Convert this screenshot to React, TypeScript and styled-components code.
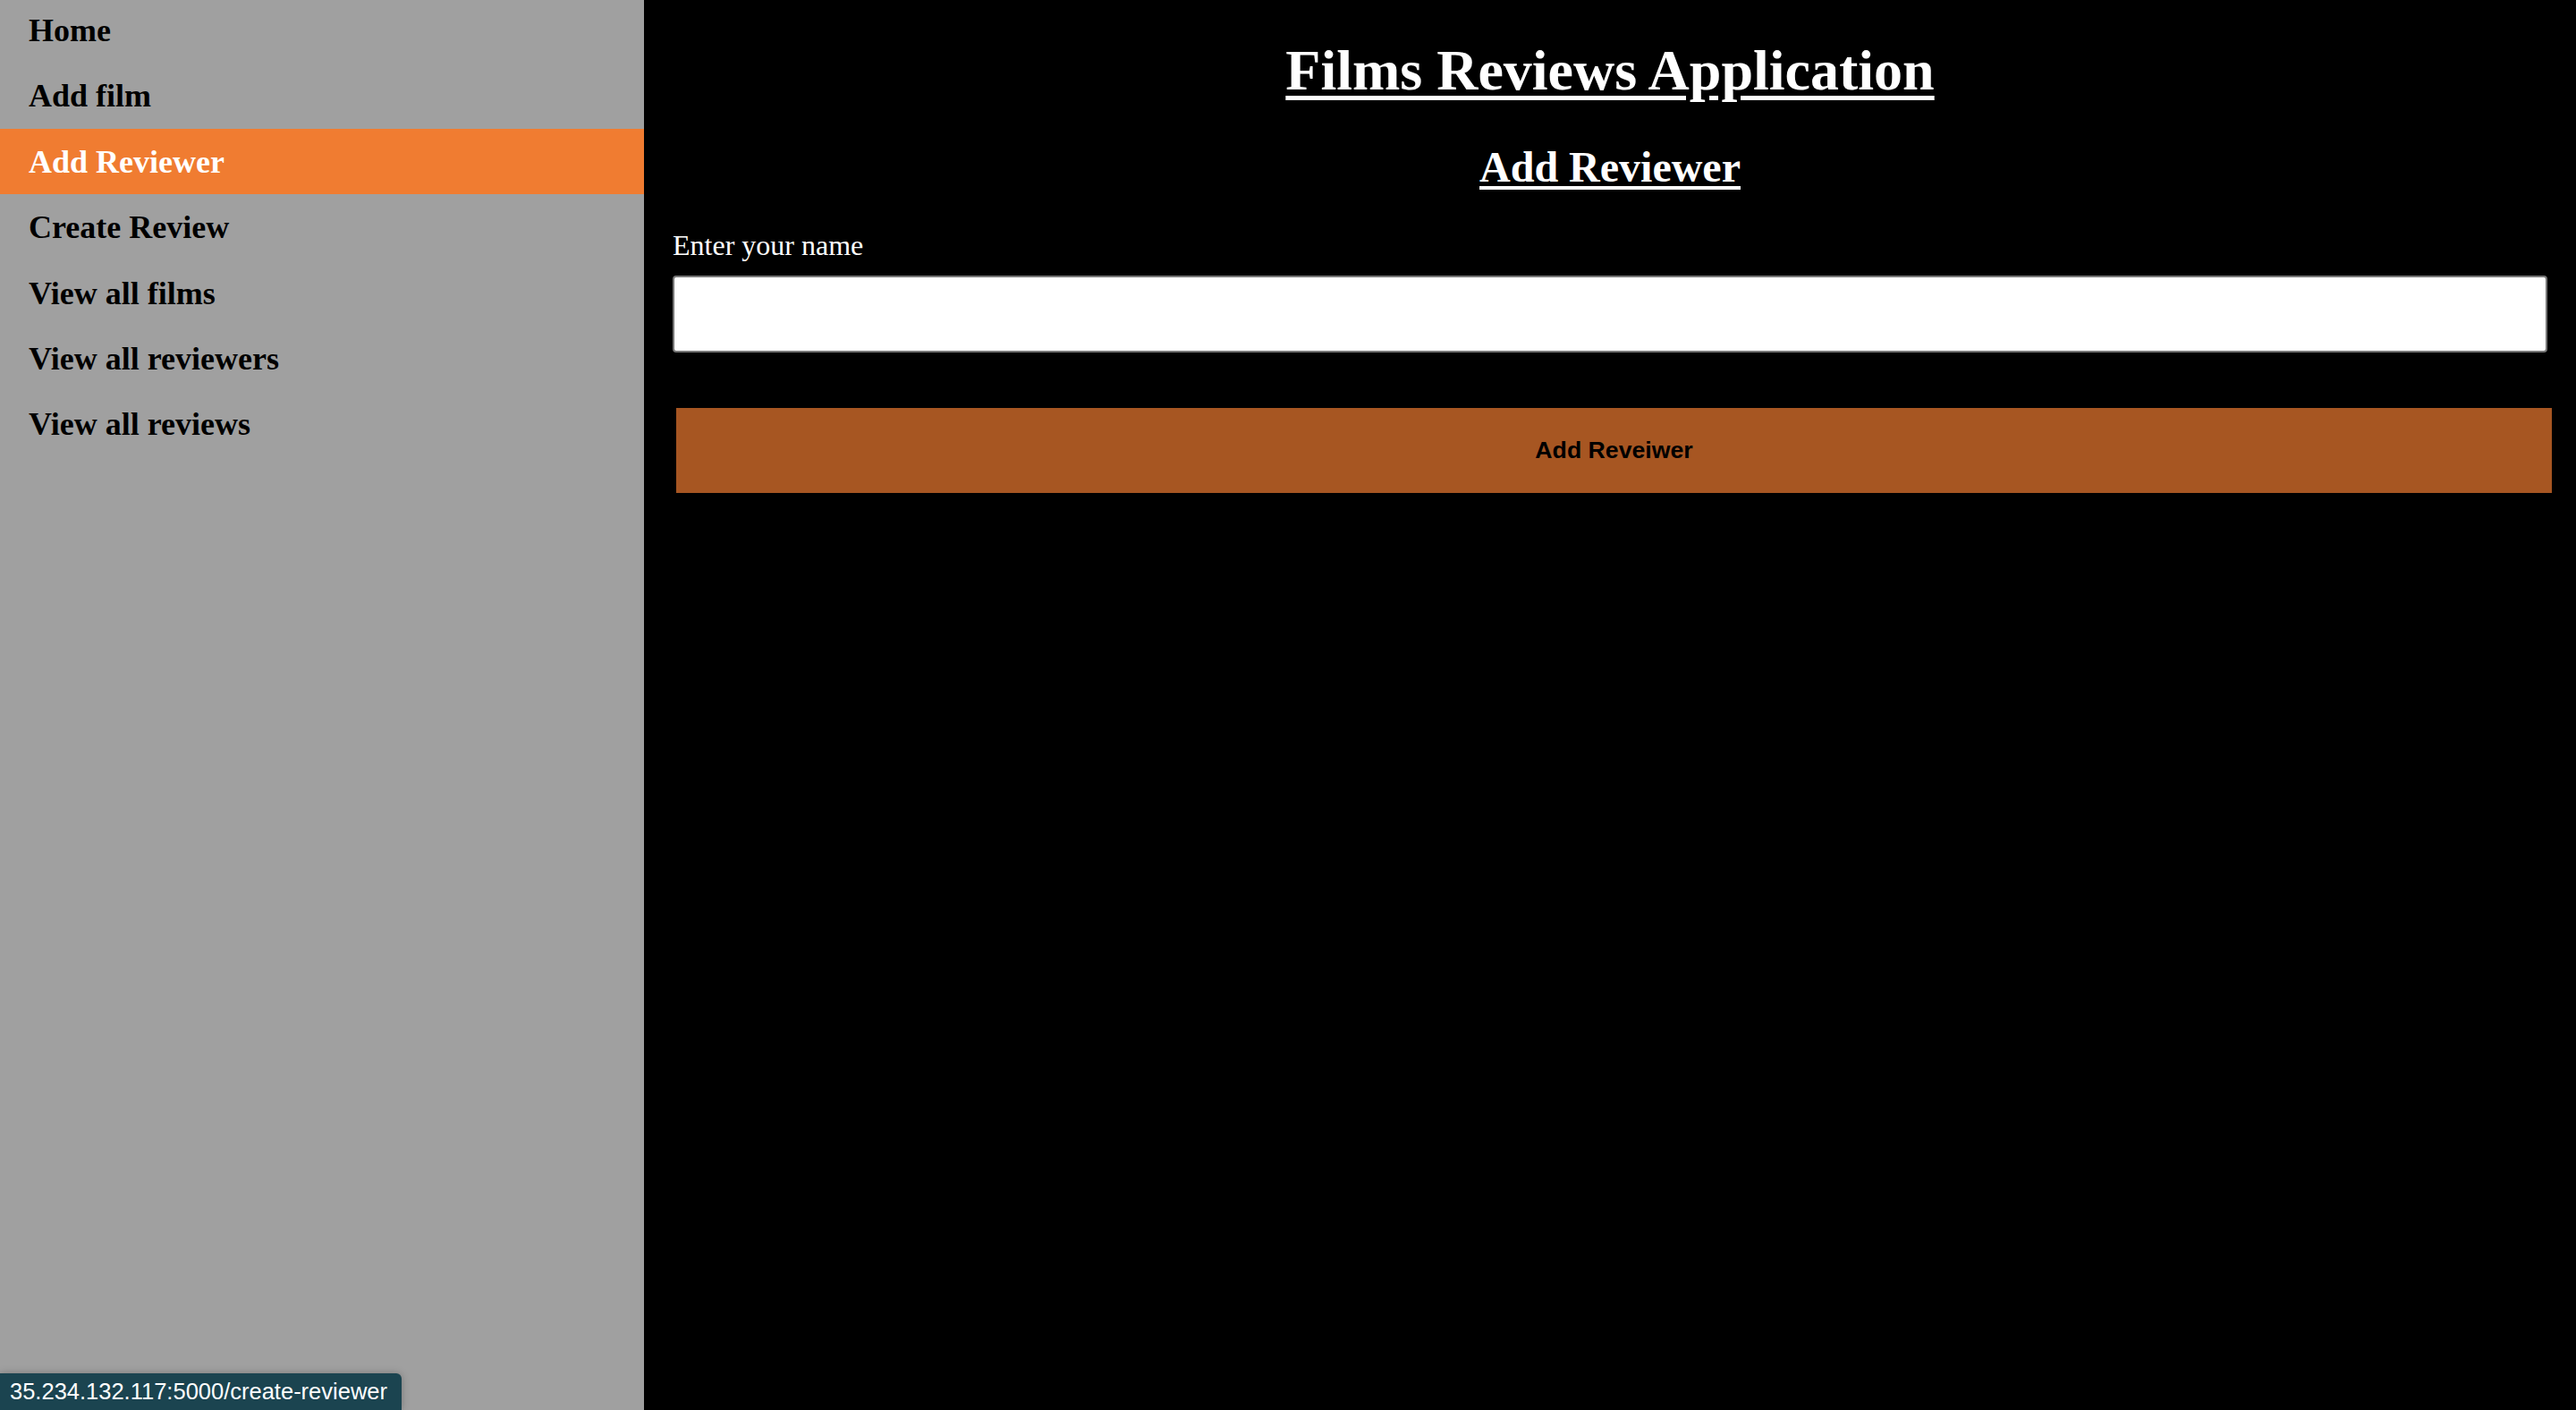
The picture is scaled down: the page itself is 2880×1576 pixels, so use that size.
import React from "react";
import styled, { createGlobalStyle } from "styled-components";

const GlobalStyle = createGlobalStyle`
  html, body {
    margin: 0;
    padding: 0;
    background: #000;
    font-family: "Liberation Serif", "Times New Roman", serif;
  }
  #root {
    min-height: 100vh;
  }
  * { box-sizing: border-box; }
`;

const Page = styled.div`
  display: flex;
  min-height: 100vh;
  width: 100%;
  position: relative;
  overflow: hidden;
`;

const Sidebar = styled.nav`
  width: 720px;
  flex: 0 0 720px;
  background: #a0a0a0;
  display: flex;
  flex-direction: column;
  margin: 0;
`;

const NavList = styled.div`
  display: flex;
  flex-direction: column;
  margin-top: -3px;
`;

const NavLink = styled.a<{ $active?: boolean }>`
  display: block;
  padding: 17px 32px 15px 32px;
  font-family: "Liberation Serif", "Times New Roman", serif;
  font-weight: bold;
  font-size: 36px;
  line-height: 41.4px;
  text-decoration: none;
  color: ${(p) => (p.$active ? "#ffffff" : "#000000")};
  background: ${(p) => (p.$active ? "#f07c31" : "transparent")};
  cursor: pointer;
`;

const Main = styled.main`
  flex: 1;
  background: #000;
  color: #fff;
  padding: 42px 32px 0 32px;
  display: flex;
  flex-direction: column;
`;

const Title = styled.h1`
  margin: 0;
  text-align: center;
  font-size: 64px;
  line-height: 74px;
  font-weight: bold;
  text-decoration: underline;
  text-decoration-thickness: 5px;
  text-underline-offset: 7px;
`;

const Subtitle = styled.h2`
  margin: 43px 0 0 0;
  text-align: center;
  font-size: 48px;
  line-height: 55px;
  font-weight: bold;
  text-decoration: underline;
  text-decoration-thickness: 4px;
  text-underline-offset: 5px;
`;

const Form = styled.form`
  display: flex;
  flex-direction: column;
  margin-top: 42px;
`;

const Label = styled.label`
  font-size: 32px;
  line-height: 37px;
  color: #fff;
`;

const TextInput = styled.input`
  margin-top: 15px;
  width: 100%;
  height: 86px;
  border: 2px solid #767676;
  border-radius: 4px;
  background: #fff;
  font-size: 32px;
  padding: 0 16px;
  outline: none;
`;

const SubmitButton = styled.button`
  margin: 62px -5px 0 4px;
  height: 95px;
  border: none;
  background: #a75622;
  color: #000;
  font-family: "Liberation Sans", Arial, sans-serif;
  font-weight: bold;
  font-size: 26.67px;
  cursor: pointer;
`;

const StatusBubble = styled.div`
  position: absolute;
  left: 0;
  bottom: 0;
  width: 449px;
  height: 41px;
  background: #1b4450;
  border-top-right-radius: 6px;
  box-shadow: 0 0 8px rgba(0, 0, 0, 0.25);
  color: #fff;
  font-family: "Liberation Sans", Arial, sans-serif;
  font-size: 25.5px;
  line-height: 41px;
  padding-left: 11px;
  white-space: nowrap;
`;

const items = [
  "Home",
  "Add film",
  "Add Reviewer",
  "Create Review",
  "View all films",
  "View all reviewers",
  "View all reviews",
];

export default function App() {
  return (
    <>
      <GlobalStyle />
      <Page>
        <Sidebar>
          <NavList>
            {items.map((it) => (
              <NavLink key={it} $active={it === "Add Reviewer"}>
                {it}
              </NavLink>
            ))}
          </NavList>
        </Sidebar>
        <Main>
          <Title>Films Reviews Application</Title>
          <Subtitle>Add Reviewer</Subtitle>
          <Form onSubmit={(e) => e.preventDefault()}>
            <Label htmlFor="name">Enter your name</Label>
            <TextInput id="name" type="text" />
            <SubmitButton type="submit">Add Reveiwer</SubmitButton>
          </Form>
        </Main>
        <StatusBubble>35.234.132.117:5000/create-reviewer</StatusBubble>
      </Page>
    </>
  );
}
